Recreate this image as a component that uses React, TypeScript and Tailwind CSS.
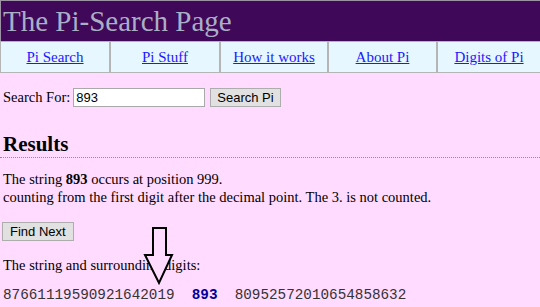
const navLinks = ["Pi Search", "Pi Stuff", "How it works", "About Pi", "Digits of Pi"];

const DownArrow = () => (
  <svg
    className="absolute left-[143px] top-[226px]"
    width="32"
    height="60"
    viewBox="0 0 32 60"
  >
    <polygon
      points="10,2 23,2 23,29 29,29 16,57 2,29 10,29"
      fill="#ffdcff"
      stroke="#000"
      strokeWidth="2"
      strokeLinejoin="miter"
    />
  </svg>
);

const App = () => {
  return (
    <div
      className="relative w-[540px] h-[307px] overflow-hidden bg-[#ffdcff] text-black"
      style={{ fontFamily: '"Liberation Serif", serif' }}
    >
      {/* Header */}
      <div className="h-[41px] border-t border-l border-[#9c93a4] bg-[#3f0858] pl-[2px]">
        <h1 className="text-[29px] leading-[40px] text-[#a9b0c6] font-normal">
          The Pi-Search Page
        </h1>
      </div>

      {/* Nav */}
      <div className="grid grid-cols-[110px_110px_108px_109px_1fr] h-[32px] border-y border-l border-[#b5b5b5] bg-[#e6f7ff]">
        {navLinks.map((label, i) => (
          <div
            key={label}
            className={`flex items-center justify-center ${i < navLinks.length - 1 ? "border-r-2 border-[#b5b5b5]" : ""}`}
          >
            <a href="#" className="text-[15px] text-[#1a1aff] underline">
              {label}
            </a>
          </div>
        ))}
      </div>

      {/* Search */}
      <div className="flex items-center mt-[14px] pl-[3px] text-[14.5px]">
        <span>Search For:</span>
        <input
          defaultValue="893"
          className="ml-[3px] w-[132px] h-[19px] bg-white border border-[#a9a9a9] px-[2px] text-[13px] outline-none"
          style={{ fontFamily: '"Liberation Sans", sans-serif' }}
        />
        <button
          className="ml-[5px] h-[19px] px-[6px] bg-[#e1e1e1] border border-[#adadad] text-[13px] leading-none"
          style={{ fontFamily: '"Liberation Sans", sans-serif' }}
        >
          Search Pi
        </button>
      </div>

      {/* Results */}
      <h2 className="mt-[23px] pl-[3px] text-[21px] font-bold leading-[24px]">Results</h2>
      <div className="mt-[1px] border-b border-dotted border-[#f0607c]" />

      <p className="mt-[12px] pl-[3px] text-[14.5px] leading-[18px]">
        The string <b>893</b> occurs at position 999.
        <br />
        counting from the first digit after the decimal point. The 3. is not counted.
      </p>

      <button
        className="mt-[16px] ml-[2px] h-[19px] px-[7px] bg-[#e1e1e1] border border-[#adadad] text-[13px] leading-none"
        style={{ fontFamily: '"Liberation Sans", sans-serif' }}
      >
        Find Next
      </button>

      <p className="mt-[13px] pl-[3px] text-[14.5px] leading-[18px]">
        The string and surrounding digits:
      </p>

      <div
        className="mt-[12px] pl-[3px] text-[14.3px] leading-[18px] text-[#333] whitespace-pre"
        style={{ fontFamily: '"Liberation Mono", monospace' }}
      >
        87661119590921642019{"  "}
        <b className="text-[#000099]">893</b>
        {"  "}80952572010654858632
      </div>

      <DownArrow />
    </div>
  );
};

export default App;
